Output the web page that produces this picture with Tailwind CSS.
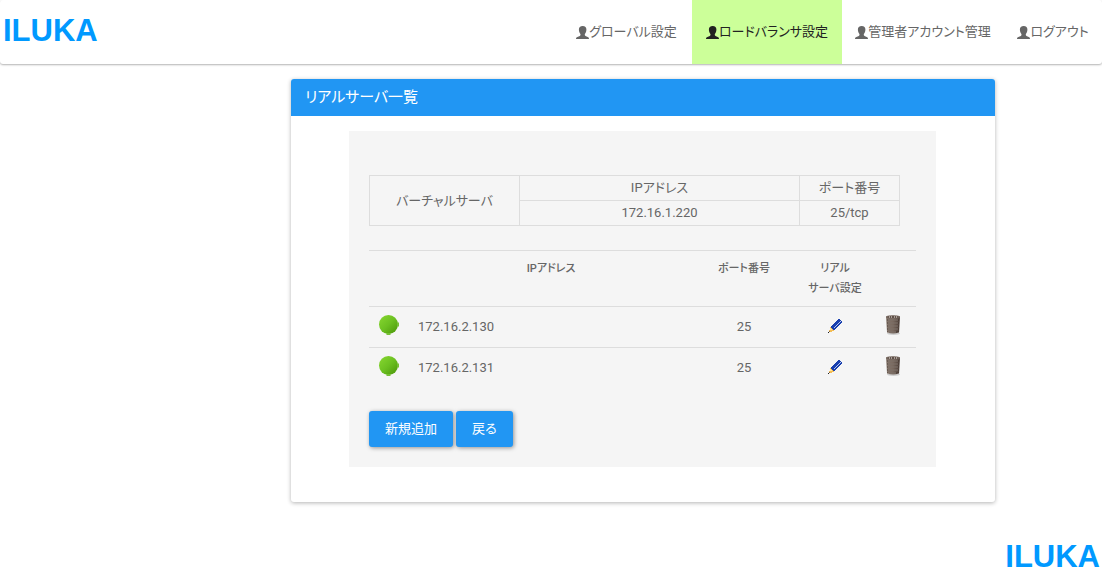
<!DOCTYPE html>
<html lang="ja">
<head>
<meta charset="utf-8">
<meta name="viewport" content="width=device-width, initial-scale=1">
<title>ILUKA</title>
<script src="https://cdn.jsdelivr.net/npm/@tailwindcss/browser@4"></script>
</head>
<body class="flex min-h-screen flex-col bg-white font-[Roboto,'Noto_Sans_CJK_JP',sans-serif] text-[13px] leading-6 text-[#666] [font-feature-settings:'palt']">
<svg class="absolute size-0" aria-hidden="true">
  <defs>
    <linearGradient id="green" x1="0" y1="0" x2="1" y2="1"><stop offset="0" stop-color="#88d831"/><stop offset=".5" stop-color="#6cc021"/><stop offset="1" stop-color="#489307"/></linearGradient>
    <linearGradient id="can" x1="0" x2="1"><stop offset="0" stop-color="#85766c"/><stop offset=".5" stop-color="#79695f"/><stop offset="1" stop-color="#4b3d37"/></linearGradient>
  </defs>
  <symbol id="user" viewBox="0 0 13 13"><path d="M6.700 0C4.200 0 2.900 1.400 2.900 3.600c0 1.800.6 3.400 1.500 4.400.3.900 0 1.500-.6 1.900L1.400 11C.5 11.400 0 11.900 0 13h13c0-1.100-.4-1.600-1.300-2L9.500 9.900c-.6-.4-.9-1-.6-1.900.9-1 1.500-2.600 1.500-4.400C10.400 1.400 9.200 0 6.700 0z" fill="currentColor"/></symbol>
  <symbol id="status" viewBox="0 0 20 20"><circle cx="9.500" cy="9.500" r="9.500" fill="url(#green)"/><path d="M18 7.500h2v4h-2zM7.500 18h4v2h-4z" fill="#76bf35"/></symbol>
  <symbol id="pencil" viewBox="0 0 14 14" shape-rendering="crispEdges">
    <path d="M10 0h2v1h1v1h1v2h-1v1h-1v1h-1v1h-1v1H9v1H8v1H7v1H5v-1H4V9H3V7h1V6h1V5h1V4h1V3h1V2h1V1h1z" fill="#193fae"/>
    <path d="M12 2h1v1h-1zM11 3h1v1h-1zM10 4h1v1h-1zM9 5h1v1H9zM8 6h1v1H8zM7 7h1v1H7zM6 8h1v1H6z" fill="#b9c9f0"/>
    <path d="M2 8h1v1h1v1h1v1h1v1H4v1H1v-2h1z" fill="#f3bd55"/><path d="M2 9h1v1h1v1H2z" fill="#ffe6a0"/><path d="M0 13h1v1H0z" fill="#222"/><path d="M1 12h1v1H1z" fill="#8b6b45"/>
  </symbol>
  <symbol id="trash" viewBox="0 0 16 21">
    <ellipse cx="8.500" cy="18.500" rx="6.500" ry="1.500" fill="#aaa" opacity=".55"/>
    <path d="M1 1.500h14L14 17.500Q8 19.500 2 17.500z" fill="url(#can)"/>
    <path d="M3 4v13M5 4v14M7 4v14M9 4v14M11 4v14M13 4v13" stroke="#43352f" stroke-width=".8" stroke-dasharray="2 1" fill="none"/>
    <path d="M4 4.500v13M6 4.500v13M8 4.500v13M10 4.500v13M12 4.500v12" stroke="#d0c5bc" stroke-width=".9" stroke-dasharray="1 2" fill="none"/>
    <ellipse cx="8" cy="2" rx="6.800" ry="1.300" fill="#5a4b44" stroke="#7b6c63" stroke-width=".9"/>
    <path d="M4 2h1M6 2h1M9 2h1M11 2h1" stroke="#eee6df"/>
  </symbol>
</svg>

<header class="flex h-16 shrink-0 items-stretch justify-between rounded-[3px] bg-white shadow-[0_1px_2px_rgba(0,0,0,0.3)]">
  <a href="#" class="flex items-center pb-[2px] pl-[3px] font-['Liberation_Sans',sans-serif] text-[31px] font-bold text-[#09f]">ILUKA</a>
  <nav class="flex whitespace-nowrap">
    <a href="#" class="flex min-w-[131px] items-center justify-center"><svg class="size-[13px]"><use href="#user"/></svg>グローバル設定</a>
    <a href="#" class="flex min-w-[150px] items-center justify-center bg-[#cf9] text-[#212121]" aria-current="page"><svg class="size-[13px]"><use href="#user"/></svg>ロードバランサ設定</a>
    <a href="#" class="flex min-w-[162px] items-center justify-center"><svg class="size-[13px]"><use href="#user"/></svg>管理者アカウント管理</a>
    <a href="#" class="flex min-w-[98px] items-center justify-center"><svg class="size-[13px]"><use href="#user"/></svg>ログアウト</a>
  </nav>
</header>

<main class="mt-[15px] mr-[107px] ml-[291px] rounded-[3px] bg-white pb-[35px] shadow-[0_1px_4px_rgba(0,0,0,0.3)]">
  <h1 class="rounded-t-[3px] bg-[#2196f3] px-[14px] pt-[6px] pb-[7px] text-[15px] text-white">リアルサーバ一覧</h1>
  <section class="mt-[15px] mr-[59px] ml-[58px] bg-[#f5f5f5] px-5 pt-11 pb-5">
    <table class="w-[531px] max-w-full table-fixed border-collapse text-center [&_td]:border [&_td]:border-[#ddd] [&_th]:border [&_th]:border-[#ddd] [&_th]:font-normal">
      <colgroup><col class="w-[150px]"><col><col class="w-[100px]"></colgroup>
      <tbody>
        <tr><th rowspan="2" scope="rowgroup">バーチャルサーバ</th><th scope="col">IPアドレス</th><th scope="col">ポート番号</th></tr>
        <tr><td>172.16.1.220</td><td>25/tcp</td></tr>
      </tbody>
    </table>
    <table class="mt-6 w-full table-fixed border-collapse text-center">
      <colgroup><col class="w-[39px]"><col><col class="w-[112px]"><col class="w-[70px]"><col class="w-[46px]"></colgroup>
      <thead class="text-[11px] leading-5 [&_th]:pt-2 [&_th]:font-medium">
        <tr class="h-14 border-t border-[#ddd] align-top">
          <th></th><th scope="col" class="pl-[6px]">IPアドレス</th><th scope="col">ポート番号</th><th scope="col">リアル<br>サーバ設定</th><th></th>
        </tr>
      </thead>
      <tbody>
        <tr class="h-[41px] border-t border-[#ddd]">
          <td class="pb-1"><svg class="mx-auto size-5" role="img" aria-label="稼働中"><use href="#status"/></svg></td>
          <td class="pl-[10px] text-left">172.16.2.130</td><td>25</td>
          <td class="pb-[2px]"><button type="button" aria-label="設定" class="mx-auto block"><svg class="size-[14px]"><use href="#pencil"/></svg></button></td>
          <td class="pb-1"><button type="button" aria-label="削除" class="mx-auto block"><svg class="h-[21px] w-4"><use href="#trash"/></svg></button></td>
        </tr>
        <tr class="h-[41px] border-t border-[#ddd]">
          <td class="pb-1"><svg class="mx-auto size-5" role="img" aria-label="稼働中"><use href="#status"/></svg></td>
          <td class="pl-[10px] text-left">172.16.2.131</td><td>25</td>
          <td class="pb-[2px]"><button type="button" aria-label="設定" class="mx-auto block"><svg class="size-[14px]"><use href="#pencil"/></svg></button></td>
          <td class="pb-1"><button type="button" aria-label="削除" class="mx-auto block"><svg class="h-[21px] w-4"><use href="#trash"/></svg></button></td>
        </tr>
      </tbody>
    </table>
    <div class="mt-[22px] flex gap-[3px]">
      <button type="button" class="h-9 rounded-[3px] bg-[#2196f3] px-4 text-white shadow-[1px_1px_4px_rgba(0,0,0,0.4)]">新規追加</button>
      <button type="button" class="h-9 rounded-[3px] bg-[#2196f3] px-4 text-white shadow-[1px_1px_4px_rgba(0,0,0,0.4)]">戻る</button>
    </div>
  </section>
</main>

<footer class="mt-auto flex justify-end pr-[2px] pb-[7px] font-['Liberation_Sans',sans-serif] text-[31px] font-bold text-[#09f]">ILUKA</footer>
</body>
</html>
